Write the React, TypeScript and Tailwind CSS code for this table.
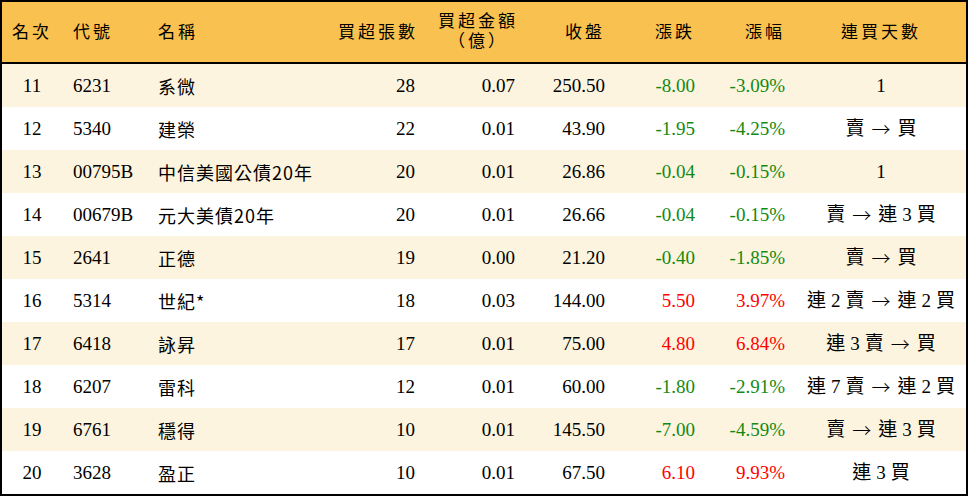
const rows = [
  { rank: 11, code: "6231", name: "系微", vol: 28, amt: "0.07", close: "250.50", chg: "-8.00", pct: "-3.09%", days: "1" },
  { rank: 12, code: "5340", name: "建榮", vol: 22, amt: "0.01", close: "43.90", chg: "-1.95", pct: "-4.25%", days: "賣 → 買" },
  { rank: 13, code: "00795B", name: "中信美國公債20年", vol: 20, amt: "0.01", close: "26.86", chg: "-0.04", pct: "-0.15%", days: "1" },
  { rank: 14, code: "00679B", name: "元大美債20年", vol: 20, amt: "0.01", close: "26.66", chg: "-0.04", pct: "-0.15%", days: "賣 → 連 3 買" },
  { rank: 15, code: "2641", name: "正德", vol: 19, amt: "0.00", close: "21.20", chg: "-0.40", pct: "-1.85%", days: "賣 → 買" },
  { rank: 16, code: "5314", name: "世紀*", vol: 18, amt: "0.03", close: "144.00", chg: "5.50", pct: "3.97%", days: "連 2 賣 → 連 2 買" },
  { rank: 17, code: "6418", name: "詠昇", vol: 17, amt: "0.01", close: "75.00", chg: "4.80", pct: "6.84%", days: "連 3 賣 → 買" },
  { rank: 18, code: "6207", name: "雷科", vol: 12, amt: "0.01", close: "60.00", chg: "-1.80", pct: "-2.91%", days: "連 7 賣 → 連 2 買" },
  { rank: 19, code: "6761", name: "穩得", vol: 10, amt: "0.01", close: "145.50", chg: "-7.00", pct: "-4.59%", days: "賣 → 連 3 買" },
  { rank: 20, code: "3628", name: "盈正", vol: 10, amt: "0.01", close: "67.50", chg: "6.10", pct: "9.93%", days: "連 3 買" },
];

const cols = "grid grid-cols-[60px_85px_179px_100px_100px_90px_90px_90px_170px] items-center";

function Days({ text }: { text: string }) {
  const parts = text.split(" ");
  return (
    <div className="flex justify-center items-center gap-[5px]">
      {parts.map((p, i) =>
        p === "→" ? (
          <span key={i} className="mx-[2px] text-[19px] font-light" style={{ fontFamily: '"Noto Sans CJK TC", sans-serif' }}>
            →
          </span>
        ) : (
          <span key={i}>{p}</span>
        )
      )}
    </div>
  );
}

export default function App() {
  return (
    <div
      className="w-[968px] h-[496px] border-2 border-black bg-white text-black text-[19px] leading-none"
      style={{ fontFamily: '"Liberation Serif", "Noto Sans CJK TC", serif' }}
    >
      <div className={`${cols} h-[62px] bg-[#f9c14f] border-b-2 border-black text-[17px] tracking-[3px]`}>
        <div className="text-center">名次</div>
        <div className="px-[11px]">代號</div>
        <div className="px-[11px]">名稱</div>
        <div className="px-[8px] text-right">買超張數</div>
        <div className="px-[8px] text-right">
          <div className="inline-block text-center leading-[20px]">
            買超金額
            <br />
            （億）
          </div>
        </div>
        <div className="px-[11px] text-right">收盤</div>
        <div className="px-[11px] text-right">漲跌</div>
        <div className="px-[11px] text-right">漲幅</div>
        <div className="text-center">連買天數</div>
      </div>
      {rows.map((r, i) => {
        const up = !r.chg.startsWith("-");
        const tone = up ? "text-[#ff0000]" : "text-[#128a12]";
        return (
          <div key={r.rank} className={`${cols} h-[43px] ${i % 2 === 0 ? "bg-[#fdf4df]" : "bg-white"}`}>
            <div className="text-center">{r.rank}</div>
            <div className="px-[11px]">{r.code}</div>
            <div className="px-[11px] text-[18px] tracking-[1px]" style={{ fontFamily: '"Noto Sans CJK TC", sans-serif' }}>
              {r.name}
            </div>
            <div className="px-[11px] text-right">{r.vol}</div>
            <div className="px-[11px] text-right">{r.amt}</div>
            <div className="px-[11px] text-right">{r.close}</div>
            <div className={`px-[11px] text-right ${tone}`}>{r.chg}</div>
            <div className={`px-[11px] text-right ${tone}`}>{r.pct}</div>
            <Days text={r.days} />
          </div>
        );
      })}
    </div>
  );
}
